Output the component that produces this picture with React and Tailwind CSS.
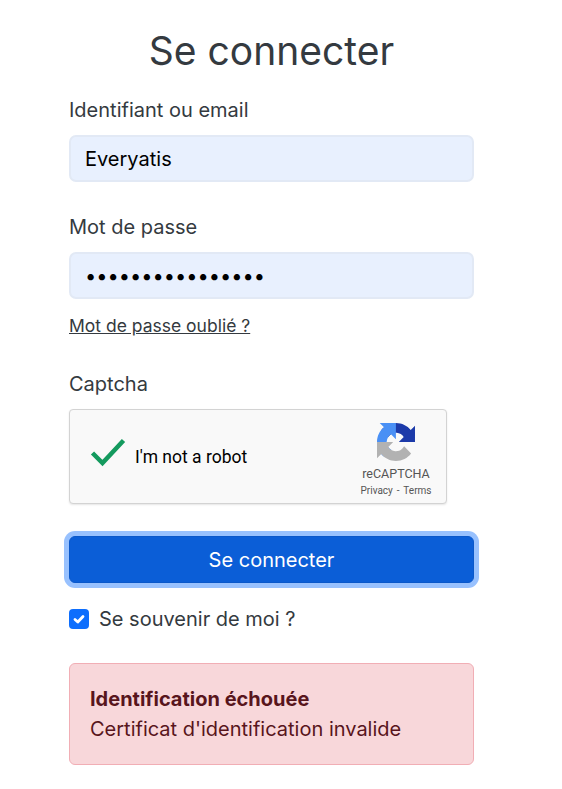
import React from 'react';

const inputClass = "block w-full h-[47px] px-[14px] rounded-[7px] border-2 border-[#e2e9f5] bg-[#e8f0fe] text-[20px] text-black outline-none";

const RecaptchaLogo = () => (
  <svg viewBox="0 0 64 64" className="w-[38px] h-[38px]">
    <path d="M64 31.955l-.033-1.37V4.687l-7.16 7.16C50.948 4.674 42.033.093 32.05.093c-10.4 0-19.622 4.96-25.458 12.64l11.736 11.86a15.55 15.55 0 0 1 4.754-5.334c2.05-1.6 4.952-2.906 8.968-2.906.485 0 .86.057 1.135.163 4.976.393 9.288 3.14 11.828 7.124l-8.307 8.307 26.2.003" fill="#1c3aa9" />
    <path d="M31.862.002l-1.37.033H4.594l7.16 7.16C4.58 13.054 0 21.97 0 31.953c0 10.4 4.96 19.622 12.64 25.458L24.5 45.675a15.55 15.55 0 0 1-5.334-4.754c-1.6-2.05-2.906-4.952-2.906-8.968 0-.485.057-.86.163-1.135.393-4.976 3.14-9.288 7.124-11.828l8.307 8.307.003-26.2" fill="#4a90f5" />
    <path d="M.002 31.953l.033 1.37v25.898l7.16-7.16c5.86 7.173 14.774 11.753 24.757 11.753 10.4 0 19.622-4.96 25.458-12.64L45.675 39.32a15.55 15.55 0 0 1-4.754 5.334c-2.05 1.6-4.952 2.906-8.968 2.906-.485 0-.86-.057-1.135-.163-4.976-.393-9.288-3.14-11.828-7.124l8.307-8.307-26.2-.003" fill="#b2b2b2" />
  </svg>
);

export default function App() {
  return (
    <div className="w-[562px] h-[789px] bg-white pl-[69px] overflow-hidden font-['Inter',sans-serif] text-[#343a40]">
      <div className="w-[405px]">
        <h1 className="pt-[27px] h-[98px] text-center text-[39px] leading-[48px] font-normal text-[#343a40]">Se connecter</h1>

        {/* Identifiant */}
        <label className="block text-[20px] leading-[24px] h-[37px]">Identifiant ou email</label>
        <input className={inputClass} defaultValue="Everyatis" />

        {/* Mot de passe */}
        <label className="block mt-[33px] text-[20px] leading-[24px] h-[37px]">Mot de passe</label>
        <input type="password" className={inputClass} defaultValue="••••••••••••••••" />
        <a className="block mt-[15px] h-[23px] text-[17.5px] leading-[23px] underline">Mot de passe oublié ?</a>

        {/* Captcha */}
        <label className="block mt-[35px] text-[20px] leading-[24px] h-[37px]">Captcha</label>
        <div className="w-[378px] h-[95px] flex items-center rounded-[4px] border border-[#d3d3d3] bg-[#f9f9f9] shadow-[0_1px_2px_rgba(0,0,0,0.1)] font-['Roboto',sans-serif]">
          <svg viewBox="0 0 36 30" className="ml-[20px] w-[36px] h-[30px] shrink-0 -mt-[8px]">
            <path d="M2.5 15 L12.5 25 L33.5 2.5" fill="none" stroke="#149a5e" strokeWidth="4.5" />
          </svg>
          <span className="ml-[9px] mt-[2px] text-[17.5px] text-black">I'm not a robot</span>
          <div className="ml-auto w-[100px] flex flex-col items-center pt-[8px]">
            <RecaptchaLogo />
            <span className="mt-[5px] text-[12.5px] leading-[16px] text-[#555]">reCAPTCHA</span>
            <span className="mt-[2px] text-[10px] leading-[14px] [word-spacing:1.5px] text-[#555] whitespace-nowrap">Privacy - Terms</span>
          </div>
        </div>

        <button className="block mt-[32px] w-full h-[47px] rounded-[6px] bg-[#0b5ed7] border border-[#0a58ca] text-white text-[20px] shadow-[0_0_0_5px_#98c1fe]">Se connecter</button>

        <label className="flex items-center mt-[24px] h-[24px]">
          <span className="w-[20px] h-[20px] rounded-[4px] bg-[#0d6efd] flex items-center justify-center">
            <svg viewBox="0 0 20 20" className="w-[20px] h-[20px]">
              <path d="M6 10.5 L8.8 13 L14 7.5" fill="none" stroke="#fff" strokeWidth="2.8" strokeLinecap="round" strokeLinejoin="round" />
            </svg>
          </span>
          <span className="ml-[10px] text-[20px] leading-[24px]">Se souvenir de moi ?</span>
        </label>

        {/* Alerte */}
        <div className="mt-[32px] h-[102px] rounded-[6px] border border-[#f1aeb5] bg-[#f8d7da] px-[20px] py-[20px] text-[#58151c] text-[20px] leading-[30px]">
          <div className="font-bold">Identification échouée</div>
          <div>Certificat d'identification invalide</div>
        </div>
      </div>
    </div>
  );
}
